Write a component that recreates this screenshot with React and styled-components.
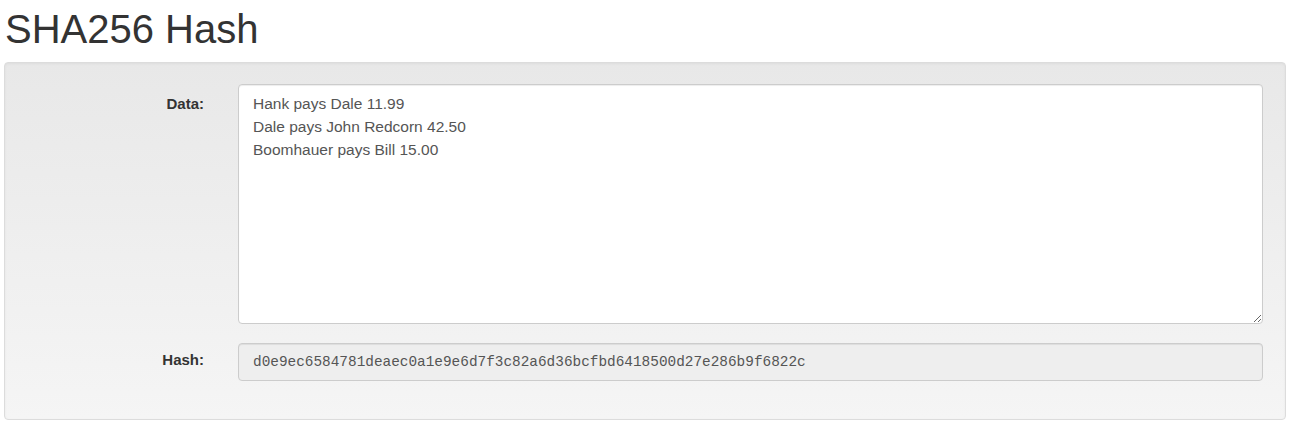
import React from 'react';
import styled, { createGlobalStyle } from 'styled-components';

const GlobalStyle = createGlobalStyle`
	html, body {
		margin: 0;
		padding: 0;
		background: #fff;
	}
	body {
		font-family: 'Liberation Sans', Arial, sans-serif;
		color: #333;
	}
`;

const Page = styled.div`
	padding: 0 6px 0 4px;
`;

const Title = styled.h1`
	margin: 7px 0 11px 1px;
	font-size: 40px;
	font-weight: 400;
	line-height: 1.1;
	color: #333;
`;

const Well = styled.div`
	border: 1px solid #dcdcdc;
	border-radius: 4px;
	background: linear-gradient(to bottom, #e8e8e8 0%, #f5f5f5 100%);
	box-shadow: inset 0 1px 3px rgba(0, 0, 0, 0.05), 0 1px 0 rgba(255, 255, 255, 0.1);
	padding: 21px 22px 38px 22px;
	display: grid;
	grid-template-columns: 177px 1fr;
	column-gap: 34px;
	row-gap: 19px;
`;

const Label = styled.label`
	text-align: right;
	font-weight: 700;
	font-size: 15px;
	line-height: 23px;
	padding-top: ${({ $offset }) => $offset}px;
	color: #333;
`;

const DataArea = styled.textarea`
	box-sizing: border-box;
	display: block;
	width: 100%;
	height: 240px;
	margin: 0;
	padding: 7px 14px;
	border: 1px solid #ccc;
	border-radius: 4px;
	background: #fff;
	box-shadow: inset 0 1px 1px rgba(0, 0, 0, 0.075);
	font-family: 'Liberation Sans', Arial, sans-serif;
	font-size: 15.5px;
	line-height: 23px;
	color: #555;
	resize: vertical;
	outline: none;
`;

const HashField = styled.div`
	box-sizing: border-box;
	display: flex;
	align-items: center;
	height: 38px;
	padding: 0 14px;
	border: 1px solid #ccc;
	border-radius: 4px;
	background: #eee;
	box-shadow: inset 0 1px 1px rgba(0, 0, 0, 0.075);
	font-family: 'Liberation Mono', 'DejaVu Sans Mono', monospace;
	font-size: 14.4px;
	color: #555;
`;

const DATA = `Hank pays Dale 11.99
Dale pays John Redcorn 42.50
Boomhauer pays Bill 15.00`;

const HASH = 'd0e9ec6584781deaec0a1e9e6d7f3c82a6d36bcfbd6418500d27e286b9f6822c';

export default function App() {
	return (
		<Page>
			<GlobalStyle />
			<Title>SHA256 Hash</Title>
			<Well>
				<Label $offset={8}>Data:</Label>
				<DataArea defaultValue={DATA} spellCheck={false} />
				<Label $offset={5}>Hash:</Label>
				<HashField>{HASH}</HashField>
			</Well>
		</Page>
	);
}
